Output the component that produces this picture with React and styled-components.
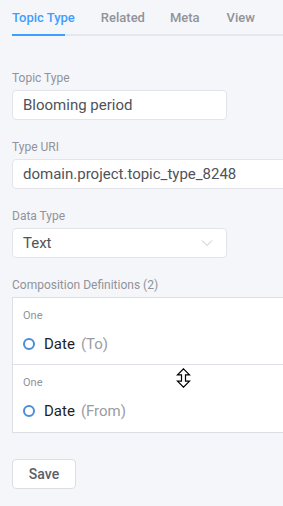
import React from "react";
import styled, { createGlobalStyle } from "styled-components";

const Global = createGlobalStyle`
  html, body { margin: 0; padding: 0; background: #f5f6fa; }
  body { font-family: Roboto, "Liberation Sans", sans-serif; -webkit-font-smoothing: antialiased; }
  * { box-sizing: border-box; }
`;

const Page = styled.div`
  position: relative;
  width: 283px;
  height: 506px;
  overflow: hidden;
  background: #f5f6fa;
`;

const Tabs = styled.div`
  display: flex;
  margin-left: 12px;
  height: 36px;
  border-bottom: 2px solid #e4e7ed;
  position: relative;
`;

const Tab = styled.div`
  font-size: 13px;
  font-weight: 500;
  padding-top: 2px;
  line-height: 32px;
  margin-right: ${p => p.$gap || 26}px;
  color: ${p => (p.$active ? "#409eff" : "#909399")};
  position: relative;
  white-space: nowrap;
`;

const Indicator = styled.div`
  position: absolute;
  left: 0;
  bottom: -2px;
  width: 53px;
  height: 2px;
  background: #409eff;
`;

const Form = styled.div`
  padding: 35px 0 0 12px;
  display: flex;
  flex-direction: column;
`;

const Field = styled.div`
  display: flex;
  flex-direction: column;
  margin-bottom: 20px;
`;

const Label = styled.div`
  font-size: 12px;
  color: #909399;
  line-height: 14px;
  margin-bottom: 5px;
`;

const Input = styled.div`
  height: 30px;
  width: ${p => p.$w || "215px"};
  background: #fff;
  border: 1px solid #e2e4ea;
  border-radius: 4px;
  padding: 0 10px;
  font-size: 15px;
  color: #4f5259;
  display: flex;
  align-items: center;
  justify-content: space-between;
  white-space: nowrap;
`;

const Chevron = styled.svg`
  width: 12px;
  height: 8px;
  margin-right: 3px;
`;

const Box = styled.div`
  width: 290px;
  background: #fff;
  border: 1px solid #dcdfe6;
  border-right: none;
`;

const Item = styled.div`
  padding: 11px 10px 0 10px;
  height: ${p => p.$h}px;
  border-top: ${p => (p.$first ? "none" : "1px solid #dcdfe6")};
`;

const Small = styled.div`
  font-size: 11px;
  color: #909399;
  line-height: 14px;
`;

const Row = styled.div`
  display: flex;
  align-items: center;
  margin-top: 12px;
  font-size: 15px;
  line-height: 18px;
`;

const Ring = styled.span`
  width: 12px;
  height: 12px;
  border: 2px solid #4a8ed6;
  border-radius: 50%;
  margin-right: 9px;
  flex: none;
`;

const Main = styled.span`
  color: #1e1f22;
`;

const Sub = styled.span`
  color: #9a9ca3;
  margin-left: 6px;
`;

const Button = styled.button`
  margin-top: 26px;
  width: 64px;
  height: 30px;
  background: #fff;
  border: 1px solid #dcdfe6;
  border-radius: 4px;
  font-family: inherit;
  font-size: 14px;
  font-weight: 500;
  color: #5b5e66;
  padding: 0;
`;

const Cursor = styled.svg`
  position: absolute;
  left: 176px;
  top: 368px;
  width: 15px;
  height: 20px;
`;

export default function App() {
  return (
    <Page>
      <Global />
      <Tabs>
        <Tab $active>
          Topic Type
          <Indicator />
        </Tab>
        <Tab $gap={25}>Related</Tab>
        <Tab $gap={27}>Meta</Tab>
        <Tab>View</Tab>
      </Tabs>
      <Form>
        <Field>
          <Label>Topic Type</Label>
          <Input>Blooming period</Input>
        </Field>
        <Field>
          <Label>Type URI</Label>
          <Input $w="300px">domain.project.topic_type_8248</Input>
        </Field>
        <Field>
          <Label>Data Type</Label>
          <Input>
            <span>Text</span>
            <Chevron viewBox="0 0 12 8">
              <path d="M1 1.5 L6 6.5 L11 1.5" fill="none" stroke="#c0c4cc" strokeWidth="1" />
            </Chevron>
          </Input>
        </Field>
        <Field>
          <Label>Composition Definitions (2)</Label>
          <Box>
            <Item $first $h={66}>
              <Small>One</Small>
              <Row>
                <Ring />
                <Main>Date</Main>
                <Sub>(To)</Sub>
              </Row>
            </Item>
            <Item $h={68}>
              <Small>One</Small>
              <Row>
                <Ring />
                <Main>Date</Main>
                <Sub>(From)</Sub>
              </Row>
            </Item>
          </Box>
          <div>
            <Button>Save</Button>
          </div>
        </Field>
      </Form>
      <Cursor viewBox="0 0 15 20">
        <path
          d="M7.5 0.8 L13.5 6.8 L9.5 6.8 L9.5 13.2 L13.5 13.2 L7.5 19.2 L1.5 13.2 L5.5 13.2 L5.5 6.8 L1.5 6.8 Z"
          fill="#fff"
          stroke="#000"
          strokeWidth="1.2"
          strokeLinejoin="miter"
        />
      </Cursor>
    </Page>
  );
}
